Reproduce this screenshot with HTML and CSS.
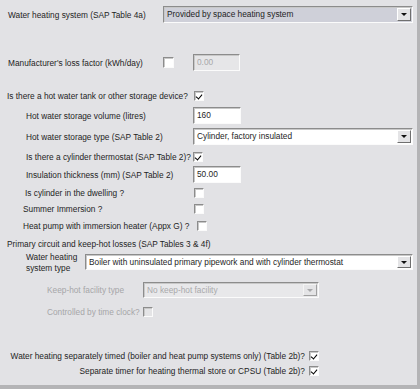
FILE: index.html
```html
<!DOCTYPE html>
<html lang="en">
<head>
  <meta charset="UTF-8">
  <title>Water heating</title>
  <link rel="stylesheet" href="styles.css">
</head>
<body>

  <div class="panel">

    <div class="row r1">
      <span class="lbl" style="width:155px">Water heating system (SAP Table 4a)</span>
      <div class="combo focus w-full1">
        <span class="combo-text">Provided by space heating system</span>
        <span class="drop"></span>
      </div>
    </div>

    <div class="row r2">
      <span class="lbl" style="width:155px">Manufacturer's loss factor (kWh/day)</span>
      <span class="check big"></span>
      <div class="edit disabled loss">0.00</div>
    </div>

    <div class="row r3 pad7">
      <span class="lbl" style="width:187px">Is there a hot water tank or other storage device?</span>
      <span class="check on"></span>
    </div>

    <div class="row r4 pad26">
      <span class="lbl" style="width:167px">Hot water storage volume (litres)</span>
      <div class="edit">160</div>
    </div>

    <div class="row r5 pad26">
      <span class="lbl" style="width:167px">Hot water storage type (SAP Table 2)</span>
      <div class="combo w-full2">
        <span class="combo-text">Cylinder, factory insulated</span>
        <span class="drop"></span>
      </div>
    </div>

    <div class="row r6 pad26">
      <span class="lbl" style="width:167px">Is there a cylinder thermostat (SAP Table 2)?</span>
      <span class="check on"></span>
    </div>

    <div class="row r7 pad26">
      <span class="lbl" style="width:167px">Insulation thickness (mm) (SAP Table 2)</span>
      <div class="edit">50.00</div>
    </div>

    <div class="row r8 pad25">
      <span class="lbl" style="width:169px">Is cylinder in the dwelling ?</span>
      <span class="check"></span>
    </div>

    <div class="row r9 pad23">
      <span class="lbl" style="width:171px">Summer Immersion ?</span>
      <span class="check"></span>
    </div>

    <div class="row r10 pad23">
      <span class="lbl" style="width:174px">Heat pump with immersion heater (Appx G) ?</span>
      <span class="check"></span>
    </div>

    <div class="row r11 pad7">
      <span class="lbl">Primary circuit and keep-hot losses (SAP Tables 3 &amp; 4f)</span>
    </div>

    <div class="row r12 pad26">
      <span class="lbl two-line" style="width:59px">Water heating system type</span>
      <div class="combo w-full3">
        <span class="combo-text">Boiler with uninsulated primary pipework and with cylinder thermostat</span>
        <span class="drop"></span>
      </div>
    </div>

    <div class="row r13 pad47">
      <span class="lbl grey" style="width:96px">Keep-hot facility type</span>
      <div class="combo disabled keephot">
        <span class="combo-text">No keep-hot facility</span>
        <span class="drop"></span>
      </div>
    </div>

    <div class="row r14 pad47">
      <span class="lbl grey" style="width:96px">Controlled by time clock?</span>
      <span class="check disabled"></span>
    </div>

    <div class="row r15">
      <span class="lbl right">Water heating separately timed (boiler and heat pump systems only) (Table 2b)?</span>
      <span class="check on"></span>
    </div>

    <div class="row r16">
      <span class="lbl right">Separate timer for heating thermal store or CPSU (Table 2b)?</span>
      <span class="check on"></span>
    </div>

  </div>

</body>
</html>
```

FILE: styles.css
```css
* {
  box-sizing: border-box;
}

body {
  margin: 0;
  padding: 0;
  font-family: "Liberation Sans", Arial, sans-serif;
  font-size: 8.3px;
  color: #1e1e1e;
  background-color: #b4b4b6;
}

.panel {
  width: 417px;
  height: 385px;
  background-color: #e2e2e5;
  padding-top: 6px;
  overflow: hidden;
}

.row {
  display: flex;
  align-items: center;
  height: 12px;
  padding-left: 8px;
}

.pad7 { padding-left: 7px; }
.pad23 { padding-left: 23px; }
.pad25 { padding-left: 25px; }
.pad26 { padding-left: 26px; }
.pad47 { padding-left: 47px; }

/* vertical placement of each row */
.r1 { height: 17px; }
.r2 { height: 17px; margin-top: 31px; }
.r3 { margin-top: 19px; }
.r4 { height: 17px; margin-top: 5px; }
.r5 { height: 17px; margin-top: 4px; }
.r6 { margin-top: 6px; }
.r7 { height: 17px; margin-top: 3px; }
.r8 { margin-top: 4px; }
.r9 { margin-top: 4px; }
.r10 { margin-top: 5px; }
.r11 { margin-top: 6px; }
.r12 { height: 22px; margin-top: 2px; align-items: flex-start; }
.r13 { height: 16px; margin-top: 8px; }
.r14 { margin-top: 8px; }
.r15 { margin-top: 32px; padding-left: 0; }
.r16 { margin-top: 3px; padding-left: 0; }

.lbl {
  flex: none;
  white-space: nowrap;
  line-height: 12px;
}

.lbl.two-line {
  white-space: normal;
  line-height: 11px;
}

.lbl.grey {
  color: #a6a6a8;
}

.lbl.right {
  width: 309px;
  padding-right: 4px;
  text-align: right;
}

/* sunken edit box */
.edit {
  flex: none;
  width: 48px;
  height: 17px;
  line-height: 15px;
  padding-left: 3px;
  background-color: #ffffff;
  border: 1px solid;
  border-color: #8c8c8c #fbfbfb #fbfbfb #8c8c8c;
  box-shadow: inset 1px 1px 0 #c8c8c8;
}

.edit.disabled {
  background-color: #e6e6e8;
  color: #a8a8aa;
}

.edit.loss {
  width: 47px;
  margin-left: 19px;
}

/* combo box */
.combo {
  flex: none;
  display: flex;
  align-items: stretch;
  height: 17px;
  background-color: #ffffff;
  border: 1px solid;
  border-color: #8c8c8c #fbfbfb #fbfbfb #8c8c8c;
  box-shadow: inset 1px 1px 0 #c8c8c8;
}

.combo.focus {
  background-color: #cfd0d9;
}

.w-full1 { width: 250px; }
.w-full2 { width: 220px; }
.w-full3 { width: 328px; height: 16px; margin-top: 2px; }

.combo.keephot {
  width: 176px;
  height: 16px;
}

.combo.disabled {
  background-color: #e8e8ea;
  color: #a8a8aa;
}

.combo-text {
  flex: 1;
  padding-left: 3px;
  line-height: 14px;
  white-space: nowrap;
  overflow: hidden;
}

.drop {
  flex: none;
  width: 14px;
  margin: 1px;
  background-color: #e4e4e6;
  border: 1px solid;
  border-color: #ffffff #6f6f6f #6f6f6f #ffffff;
  display: flex;
  align-items: center;
  justify-content: center;
}

.drop::after {
  content: "";
  border-left: 3px solid transparent;
  border-right: 3px solid transparent;
  border-top: 3px solid #111111;
}

.combo.disabled .drop::after {
  border-top-color: #a8a8aa;
}

.combo.disabled .drop {
  border-color: #f4f4f4 #a0a0a0 #a0a0a0 #f4f4f4;
}

/* check box */
.check {
  flex: none;
  position: relative;
  width: 10px;
  height: 10px;
  background-color: #ffffff;
  border: 1px solid;
  border-color: #8c8c8c #fbfbfb #fbfbfb #8c8c8c;
  box-shadow: inset 1px 1px 0 #c8c8c8;
}

.check.big {
  width: 11px;
  height: 11px;
}

.check.disabled {
  background-color: #e4e4e6;
}

.check.on::after {
  content: "";
  position: absolute;
  left: 2px;
  top: 1px;
  width: 3px;
  height: 5px;
  border-right: 1.6px solid #000000;
  border-bottom: 1.6px solid #000000;
  transform: rotate(40deg);
}
```
